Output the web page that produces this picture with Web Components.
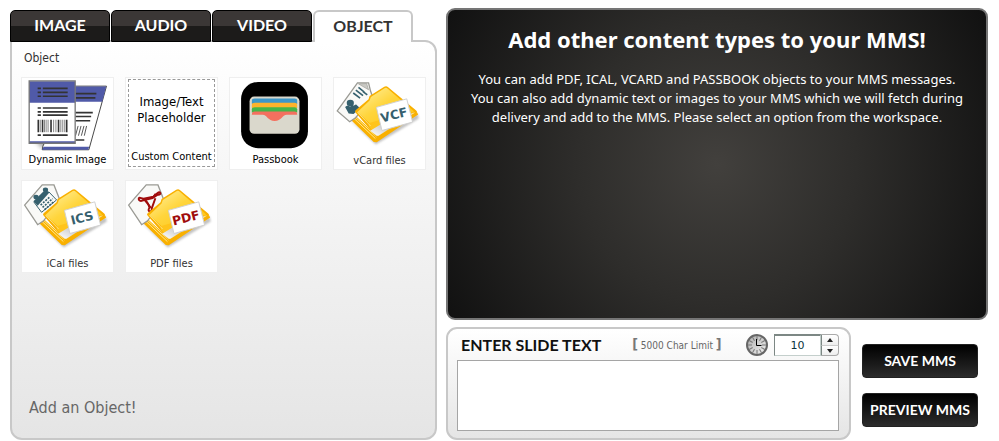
<!DOCTYPE html>
<html lang="en">
<head>
<meta charset="utf-8">
<title>MMS Composer</title>
<style>
  body {
    margin: 8px 11px 2px 10px;
    background: #fff;
    color: #333;
    font: 11px/16px "DejaVu Sans Condensed", "Noto Sans", sans-serif;
    --heading: Lato, "Open Sans", sans-serif;
    --line: #c8c8c8;
  }
</style>
</head>
<body>
<mms-composer></mms-composer>

<script>
/* Small helper: attach an open root and fill it once. */
class BaseElement extends HTMLElement {
  connectedCallback() {
    if (this.shadowRoot) return;
    this.attachShadow({ mode: "open" }).innerHTML = this.template();
    this.ready();
  }
  ready() {}
}

/* ---------- icons ---------- */

const cornerCard = "M72 15H106L112 40 120 62 66 122 48 134 10 101Z";
const hexSheet = "M8 74 62 12H98L116 58 66 122 48 134Z";

// Yellow folder with a sheet behind it and a file type tag in front
const folder = (outline, sheet, tag, color) => `
  <defs>
    <linearGradient id="front" x1="0" y1="0" x2="1" y2="1">
      <stop offset="0" stop-color="#fff3a8"/><stop offset=".45" stop-color="#ffd53c"/><stop offset="1" stop-color="#ffc20e"/>
    </linearGradient>
    <linearGradient id="inner" x1="0" y1="1" x2="1" y2="0">
      <stop offset="0" stop-color="#fff"/><stop offset=".5" stop-color="#b9b9b9"/><stop offset="1" stop-color="#eee"/>
    </linearGradient>
    <filter id="soft"><feGaussianBlur stdDeviation="4"/></filter>
  </defs>
  <path d="M40 120 128 204 260 124 256 108 128 190Z" fill="#999" opacity=".6" filter="url(#soft)"/>
  <path d="M33 102 44 96 136 180 255 106 258 112 131 197 122 196 33 110Z" fill="#f9b000"/>
  <path d="M37 101 127 186M42 98 131 181" stroke="#ffe98f" stroke-width="3"/>
  <path d="${outline}" fill="#f9f9f7" stroke="#9a9a94" stroke-width="4"/>
  ${sheet}
  <path d="M66 106Q62 102 67 98L106 65 109 55 154 27Q160 23 166 28L252 100Q258 106 251 110L140 181Q134 184 130 180Z" fill="#f9b000"/>
  <path d="M72 104 109 69 113 58 156 31Q160 29 164 32L246 103 116 146Z" fill="url(#front)"/>
  <path d="M108 138 143 128 246 104 248 107 136 178 132 177 106 148Z" fill="#ffc41c"/>
  <path d="M111 162 150 138 248 106 136 177 131 177Z" fill="url(#inner)"/>
  <path d="M72 105 112 147" stroke="#fff6bf" stroke-width="2"/>
  <path d="M130 90 223 64 241 135 147 161Z" fill="#fff" stroke="#d0d0d0" stroke-width="3"/>
  <text transform="translate(187 126) rotate(-14)" text-anchor="middle" font-family="DejaVu Sans" font-weight="700" font-size="38" fill="${color}">${tag}</text>`;

const icons = {
  vcf: folder(cornerCard, `
    <path d="M75 18 100 17 106 36Z" fill="#c9c9c4" stroke="#9a9a94" stroke-width="2"/>
    <path d="M59 46 80 62M67 37 89 54M75 29 93 43M89 42 102 52" stroke="#35606e" stroke-width="5"/>
    <ellipse cx="50" cy="77" rx="11" ry="10" fill="#35606e"/>
    <path d="M34 89Q42 80 48 87L58 91Q62 80 68 81L80 93 60 110 45 109Z" fill="#35606e"/>
    <path d="M56 80 67 93 61 102 50 88Z" fill="#35606e"/>`, "VCF", "#35606e"),

  ics: folder(hexSheet, `
    <path d="M35 62 72 26 84 35 48 76Z" fill="#35606e"/>
    <ellipse cx="43" cy="49" rx="8" ry="7" fill="#35606e"/><ellipse cx="72" cy="27" rx="8" ry="7" fill="#35606e"/>
    <path d="M36 64 60 96 106 58 82 33" fill="none" stroke="#35606e" stroke-width="3"/>
    <path d="M57 74 86 48M63 81 94 54M69 88 99 62" stroke="#35606e" stroke-width="5" stroke-dasharray="6 4"/>`, "ICS", "#35606e"),

  pdf: folder(hexSheet, `
    <g fill="none" stroke="#a00c0c" stroke-width="6" stroke-linejoin="round">
      <path d="M47 53C34 45 38 66 50 60L82 52 97 42C111 44 105 28 97 37L84 48 54 54Z"/>
      <path d="M84 49 91 39M54 56C66 63 70 70 72 82C62 95 82 99 79 84L90 53"/>
      <path d="M55 55 76 82"/>
    </g>`, "PDF", "#a00c0c"),

  passbook: `
    <rect x="34" y="12" width="205" height="203" rx="52" fill="#000"/>
    <rect x="60" y="57" width="153" height="114" rx="14" fill="#dad8cc"/>
    <path d="M67 80V70Q67 63 76 63H198Q206 63 206 70V80Z" fill="#3c97c9"/>
    <path d="M67 92V82Q67 76 76 76H198Q206 76 206 82V92Z" fill="#fdb32c"/>
    <path d="M67 106V96Q67 90 76 90H198Q206 90 206 96V106Z" fill="#45b549"/>
    <path d="M67 112Q67 103 76 103H198Q206 103 206 112V113H174C160 114 158 132 137 132S114 114 100 113H67Z" fill="#f4705f"/>`,

  dynamic: `
    <defs><filter id="soft"><feGaussianBlur stdDeviation="6"/></filter></defs>
    <path d="M30 180H170V215H60Z" fill="#888" opacity=".65" filter="url(#soft)"/>
    <path d="M158 25H259L205 220H62L64 209 140 60Z" fill="#fff" stroke="#444" stroke-width="3"/>
    <path d="M158 26H258L246 73H158ZM66 211H206L203 220H62Z" fill="#505aa8"/>
    <path d="M164 48H228M164 61H225M164 106H217M164 118H212M164 131H209M164 190H191" stroke="#333" stroke-width="5"/>
    <path d="M164 177 172 147M173 177 181 147M182 177 190 147M191 177 198 147" stroke="#555" stroke-width="3"/>
    <path d="M22 10H163V199H22Z" fill="#fff"/>
    <path d="M22 10H163V76H22ZM22 194H163V200H22Z" fill="#505aa8"/>
    <path d="M22 9H163V200H22Z" fill="none" stroke="#777" stroke-width="4"/>
    <path d="M64 32H140M64 44H140M64 56H140M64 92H140M64 104H140M64 114H140M64 175H140" stroke="#333" stroke-width="5"/>
    <path d="M48 32H58M48 44H58M48 56H58M48 92H58M48 104H58M48 114H58M48 175H58" stroke="#333" stroke-width="5"/>
    <path d="M50 128V166M63 128V166M89 128V166M112 128V166M137 128V166" stroke="#333" stroke-width="5"/>
    <path d="M56 128V166M69 128V166M74 128V166M80 128V166M97 128V166M104 128V166M119 128V166M125 128V166M131 128V166" stroke="#444" stroke-width="2"/>`
};

customElements.define("object-tile", class extends BaseElement {
  template() {
    const icon = icons[this.getAttribute("icon")];
    return `
      <style>
        :host { display: block; }
        button {
          display: grid; width: 100%; height: 100%; padding: 0;
          border: 1px solid #efefef; background: #fff;
          color: inherit; font: inherit; text-align: center; cursor: pointer;
        }
        button > * { grid-area: 1 / 1; }
        button:focus-visible { outline: 2px solid #505aa8; }
        svg { display: block; width: 100%; }
        .label { align-self: end; }
        :host([strong]) .label { color: #000; padding-bottom: 1px; }
        .dashed {
          display: grid; align-content: space-between; margin: 1px 2px 2px;
          border: 1px dashed #999; padding: 14px 0 1px; color: #000;
        }
        .sample { font-size: 13px; }
      </style>
      <button type="button">
        ${icon
          ? `<svg viewBox="0 0 279 279" aria-hidden="true">${icon}</svg><span class="label"><slot></slot></span>`
          : `<span class="dashed"><span class="sample">Image/Text<br>Placeholder</span><slot></slot></span>`}
      </button>`;
  }
  ready() {
    this.shadowRoot.querySelector("button").addEventListener("click", () => {
      this.dispatchEvent(new CustomEvent("object-picked", { bubbles: true, composed: true }));
    });
  }
});

customElements.define("media-tabs", class extends BaseElement {
  template() {
    const tabs = ["IMAGE", "AUDIO", "VIDEO", "OBJECT"];
    return `
      <style>
        :host { display: block; position: relative; z-index: 1; }
        div { display: grid; grid-template-columns: repeat(4, 100px); gap: 1px; }
        button {
          height: 32px; border: 1px solid #000; border-radius: 5px 5px 0 0; padding: 0 0 2px;
          background: linear-gradient(#3b3736 50%, #1c1b1a 50%);
          color: #fff; font: 700 16px/20px var(--heading); cursor: pointer;
        }
        button[aria-selected="true"] {
          border: 2px solid var(--line); border-bottom: 0; border-radius: 6px 6px 0 0;
          background: #fff; color: #333;
        }
      </style>
      <div role="tablist">
        ${tabs.map((t) => `<button type="button" role="tab" aria-selected="${t === "OBJECT"}">${t}</button>`).join("")}
      </div>`;
  }
  ready() {
    const buttons = [...this.shadowRoot.querySelectorAll("button")];
    buttons.forEach((b) => b.addEventListener("click", () => {
      buttons.forEach((o) => o.setAttribute("aria-selected", o === b));
    }));
  }
});

customElements.define("object-panel", class extends BaseElement {
  template() {
    return `
      <style>
        :host {
          display: flex; flex-direction: column; flex: 1; margin-top: -2px;
          border: 2px solid var(--line); border-radius: 0 12px 12px 12px;
          padding: 8px 9px 20px; background: linear-gradient(#fff, #e5e5e5);
        }
        h2 { margin: 0 3px 11px; font: inherit; font-size: 12px; }
        .tiles {
          display: grid; grid-template-columns: repeat(4, 93px);
          grid-auto-rows: 93px; gap: 10px 11px;
        }
        p { margin: auto 8px 0; color: #666; font-size: 16px; line-height: 20px; }
      </style>
      <h2>Object</h2>
      <div class="tiles"><slot></slot></div>
      <p>Add an Object!</p>`;
  }
});

customElements.define("message-preview", class extends BaseElement {
  template() {
    return `
      <style>
        :host {
          display: block; min-height: 272px; padding: 14px 20px 22px;
          border: 2px solid #757575; border-radius: 9px; color: #fff; text-align: center;
          background: radial-gradient(circle at 50% 50%, #42403d 0, #2e2d2b 45%, #111 100%);
          font-family: "Noto Sans", "Open Sans", sans-serif;
        }
        ::slotted(h1) { margin: 0 0 16px; font-size: 22px; line-height: 30px; }
        ::slotted(p) { margin: 0; font-size: 13px; line-height: 19px; }
      </style>
      <slot></slot>`;
  }
});

customElements.define("duration-stepper", class extends BaseElement {
  template() {
    // twelve hour marks round the dial
    const ticks = Array.from({ length: 12 }, (_, i) =>
      `<path d="M12 3v4" transform="rotate(${i * 30} 12 12)"/>`).join("");
    return `
      <style>
        :host { display: flex; align-items: center; }
        label { display: flex; margin-right: 5px; }
        svg { display: block; }
        input {
          box-sizing: border-box; width: 47px; height: 22px; padding: 0; text-align: center;
          border: 1px solid #c4cfcc; border-top: 2px solid #7c8784; border-left-color: #7c8784;
          background: #fff; color: #0b333c; font: 11px "DejaVu Sans", sans-serif;
        }
        .steps { display: grid; }
        button {
          display: grid; place-items: center; width: 18px; height: 11px; padding: 0;
          border: 1px solid #aaa; border-left-color: #7c8784;
          background: linear-gradient(#fff, #eee);
        }
        .up { border-top-right-radius: 4px; border-bottom: 0; }
        .down { border-bottom-right-radius: 4px; border-top-color: #ccc; }
      </style>
      <label for="seconds">
        <svg width="24" height="24" viewBox="0 0 24 24" role="img" aria-label="Slide duration">
          <defs><linearGradient id="dial" x1="0" y1="0" x2="1" y2="1"><stop offset="0" stop-color="#aaa"/><stop offset="1" stop-color="#f4f4f4"/></linearGradient></defs>
          <circle cx="12" cy="12" r="10" fill="url(#dial)" stroke="#666" stroke-width="2"/>
          <g stroke="#777">${ticks}</g>
          <path d="M11.5 6v6.5h5" fill="none" stroke="#000"/>
        </svg>
      </label>
      <input id="seconds" type="text" inputmode="numeric" value="10">
      <span class="steps">
        <button class="up" type="button" aria-label="Increase"><svg width="6" height="4"><path d="M0 4 3 0 6 4Z" fill="#222"/></svg></button>
        <button class="down" type="button" aria-label="Decrease"><svg width="6" height="4"><path d="M0 0H6L3 4Z" fill="#222"/></svg></button>
      </span>`;
  }
  ready() {
    const input = this.shadowRoot.querySelector("input");
    const step = (n) => { input.value = Math.max(1, (Number(input.value) || 0) + n); };
    this.shadowRoot.querySelector(".up").addEventListener("click", () => step(1));
    this.shadowRoot.querySelector(".down").addEventListener("click", () => step(-1));
  }
});

customElements.define("slide-text", class extends BaseElement {
  template() {
    return `
      <style>
        :host {
          display: block; border: 2px solid var(--line); border-radius: 11px;
          padding: 3px 10px 7px 9px; background: linear-gradient(#fff, #e5e5e5);
        }
        .bar { display: flex; align-items: center; min-height: 26px; margin-bottom: 2px; }
        .title { margin: 0 31px 0 4px; color: #111; font: 700 16px/20px var(--heading); }
        .limit { color: #666; font-size: 10px; white-space: nowrap; }
        .limit b { color: #777; font-size: 14px; }
        duration-stepper { margin-left: auto; }
        textarea {
          display: block; box-sizing: border-box; width: 100%; height: 71px;
          margin: 0; border: 1px solid #a5a5a5; padding: 4px; resize: none;
          background: #fff; font: inherit;
        }
      </style>
      <div class="bar">
        <label class="title" for="text">ENTER SLIDE TEXT</label>
        <span class="limit"><b>[</b> 5000 Char Limit <b>]</b></span>
        <duration-stepper></duration-stepper>
      </div>
      <textarea id="text" maxlength="5000"></textarea>`;
  }
});

customElements.define("action-button", class extends BaseElement {
  template() {
    return `
      <style>
        :host { display: block; }
        button {
          width: 100%; height: 34px; padding: 0; border: 1px solid #222; border-radius: 4px;
          background: linear-gradient(#000, #2c2c2c); color: #fff;
          font: 700 14px/20px var(--heading); white-space: nowrap; cursor: pointer;
        }
      </style>
      <button type="button"><slot></slot></button>`;
  }
});

customElements.define("mms-composer", class extends BaseElement {
  template() {
    return `
      <style>
        :host {
          display: grid; grid-template-columns: minmax(427px, 427fr) minmax(0, 542fr);
          gap: 9px;
        }
        .left { display: flex; flex-direction: column; padding-top: 2px; }
        .right { display: flex; flex-direction: column; gap: 7px; }
        .bottom { display: grid; grid-template-columns: minmax(0, 1fr) 116px; gap: 11px; padding-right: 10px; }
        .actions { display: grid; align-content: center; gap: 15px; padding-top: 3px; }
      </style>
      <section class="left">
        <media-tabs></media-tabs>
        <object-panel>
          <object-tile icon="dynamic" strong>Dynamic Image</object-tile>
          <object-tile>Custom Content</object-tile>
          <object-tile icon="passbook" strong>Passbook</object-tile>
          <object-tile icon="vcf">vCard files</object-tile>
          <object-tile icon="ics">iCal files</object-tile>
          <object-tile icon="pdf">PDF files</object-tile>
        </object-panel>
      </section>
      <section class="right">
        <message-preview>
          <h1>Add other content types to your MMS!</h1>
          <p>You can add PDF, ICAL, VCARD and PASSBOOK objects to your MMS messages. You can also add dynamic text or images to your MMS which we will fetch during delivery and add to the MMS. Please select an option from the workspace.</p>
        </message-preview>
        <div class="bottom">
          <slide-text></slide-text>
          <div class="actions">
            <action-button>SAVE MMS</action-button>
            <action-button>PREVIEW MMS</action-button>
          </div>
        </div>
      </section>`;
  }
});
</script>
</body>
</html>
